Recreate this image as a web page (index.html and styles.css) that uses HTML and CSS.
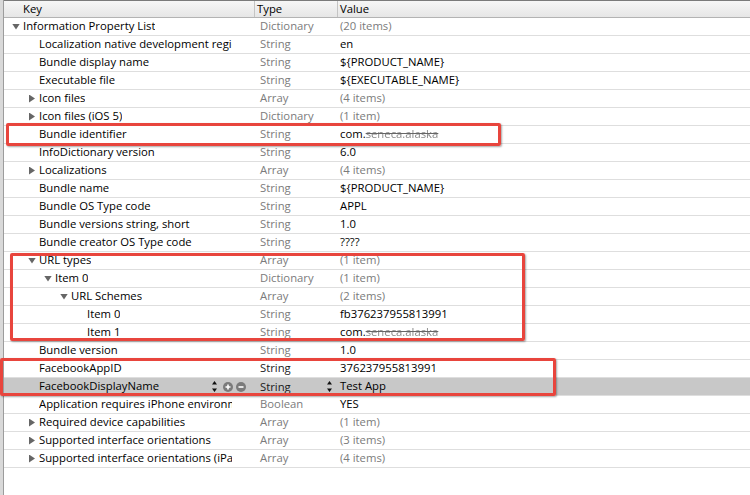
FILE: index.html
```html
<!DOCTYPE html>
<html>
<head>
<meta charset="utf-8">
<link rel="stylesheet" href="styles.css">
</head>
<body>
<div class="page">
  <div class="window">
    <div class="header">
      <div class="hc hkey">Key</div>
      <div class="hc htype">Type</div>
      <div class="hc hvalue">Value</div>
    </div>
    <div class="rows">
      <div class="row"><div class="k l0"><span class="slot"><span class="tri down"></span></span><span class="kt">Information Property List</span></div><div class="t">Dictionary</div><div class="v dim">(20 items)</div></div>
      <div class="row"><div class="k l1"><span class="slot"></span><span class="kt">Localization native development region</span></div><div class="t">String</div><div class="v">en</div></div>
      <div class="row"><div class="k l1"><span class="slot"></span><span class="kt">Bundle display name</span></div><div class="t">String</div><div class="v">${PRODUCT_NAME}</div></div>
      <div class="row"><div class="k l1"><span class="slot"></span><span class="kt">Executable file</span></div><div class="t">String</div><div class="v">${EXECUTABLE_NAME}</div></div>
      <div class="row"><div class="k l1"><span class="slot"><span class="tri right"></span></span><span class="kt">Icon files</span></div><div class="t">Array</div><div class="v dim">(4 items)</div></div>
      <div class="row"><div class="k l1"><span class="slot"><span class="tri right"></span></span><span class="kt">Icon files (iOS 5)</span></div><div class="t">Dictionary</div><div class="v dim">(1 item)</div></div>
      <div class="row"><div class="k l1"><span class="slot"></span><span class="kt">Bundle identifier</span></div><div class="t">String</div><div class="v">com.<span class="blur">seneca.alaska</span></div></div>
      <div class="row"><div class="k l1"><span class="slot"></span><span class="kt">InfoDictionary version</span></div><div class="t">String</div><div class="v">6.0</div></div>
      <div class="row"><div class="k l1"><span class="slot"><span class="tri right"></span></span><span class="kt">Localizations</span></div><div class="t">Array</div><div class="v dim">(4 items)</div></div>
      <div class="row"><div class="k l1"><span class="slot"></span><span class="kt">Bundle name</span></div><div class="t">String</div><div class="v">${PRODUCT_NAME}</div></div>
      <div class="row"><div class="k l1"><span class="slot"></span><span class="kt">Bundle OS Type code</span></div><div class="t">String</div><div class="v">APPL</div></div>
      <div class="row"><div class="k l1"><span class="slot"></span><span class="kt">Bundle versions string, short</span></div><div class="t">String</div><div class="v">1.0</div></div>
      <div class="row"><div class="k l1"><span class="slot"></span><span class="kt">Bundle creator OS Type code</span></div><div class="t">String</div><div class="v">????</div></div>
      <div class="row"><div class="k l1"><span class="slot"><span class="tri down"></span></span><span class="kt">URL types</span></div><div class="t">Array</div><div class="v dim">(1 item)</div></div>
      <div class="row"><div class="k l2"><span class="slot"><span class="tri down"></span></span><span class="kt">Item 0</span></div><div class="t">Dictionary</div><div class="v dim">(1 item)</div></div>
      <div class="row"><div class="k l3"><span class="slot"><span class="tri down"></span></span><span class="kt">URL Schemes</span></div><div class="t">Array</div><div class="v dim">(2 items)</div></div>
      <div class="row"><div class="k l4"><span class="slot"></span><span class="kt">Item 0</span></div><div class="t">String</div><div class="v">fb376237955813991</div></div>
      <div class="row"><div class="k l4"><span class="slot"></span><span class="kt">Item 1</span></div><div class="t">String</div><div class="v">com.<span class="blur">seneca.alaska</span></div></div>
      <div class="row"><div class="k l1"><span class="slot"></span><span class="kt">Bundle version</span></div><div class="t">String</div><div class="v">1.0</div></div>
      <div class="row"><div class="k l1"><span class="slot"></span><span class="kt">FacebookAppID</span></div><div class="t dark">String</div><div class="v">376237955813991</div></div>
      <div class="row selected"><div class="k l1 withctl"><span class="slot"></span><span class="kt">FacebookDisplayName</span>
          <span class="ctls">
            <svg class="updown" width="5" height="11" viewBox="0 0 5 11"><path d="M0 3.5L2.5 0L5 3.5Z M0 7.5L5 7.5L2.5 11Z" fill="#111"/></svg>
            <svg class="circ" width="10" height="10" viewBox="0 0 10 10"><circle cx="5" cy="5" r="5" fill="#7b7b7b"/><path d="M2.5 5H7.5M5 2.5V7.5" stroke="#fff" stroke-width="1.6"/></svg>
            <svg class="circ" width="10" height="10" viewBox="0 0 10 10"><circle cx="5" cy="5" r="5" fill="#7b7b7b"/><path d="M2.5 5H7.5" stroke="#fff" stroke-width="1.6"/></svg>
          </span></div><div class="t dark withctl"><span>String</span><svg class="updown" width="5" height="11" viewBox="0 0 5 11"><path d="M0 3.5L2.5 0L5 3.5Z M0 7.5L5 7.5L2.5 11Z" fill="#111"/></svg></div><div class="v">Test App</div></div>
      <div class="row"><div class="k l1"><span class="slot"></span><span class="kt">Application requires iPhone environment</span></div><div class="t">Boolean</div><div class="v">YES</div></div>
      <div class="row"><div class="k l1"><span class="slot"><span class="tri right"></span></span><span class="kt">Required device capabilities</span></div><div class="t">Array</div><div class="v dim">(1 item)</div></div>
      <div class="row"><div class="k l1"><span class="slot"><span class="tri right"></span></span><span class="kt">Supported interface orientations</span></div><div class="t">Array</div><div class="v dim">(3 items)</div></div>
      <div class="row"><div class="k l1"><span class="slot"><span class="tri right"></span></span><span class="kt">Supported interface orientations (iPad)</span></div><div class="t">Array</div><div class="v dim">(4 items)</div></div>
    </div>
  </div>
  <div class="mark mark1"></div>
  <div class="mark mark2"></div>
  <div class="mark mark3"></div>
</div>
</body>
</html>
```

FILE: styles.css
```css
html, body {
  margin: 0;
  padding: 0;
}
body {
  background: #d9d9d9;
  font-family: "Open Sans", "Noto Sans", "DejaVu Sans", sans-serif;
  font-size: 11.3px;
  color: #000;
  overflow: hidden;
}
.page {
  position: relative;
  width: 750px;
  height: 495px;
}
.window {
  margin-left: 3px;
  border-left: 1px solid #9c9c9c;
  background: #fff;
  height: 495px;
}
.header {
  display: grid;
  grid-template-columns: 250px 83px 1fr;
  height: 16px;
  border-top: 1px solid #7a7a7a;
  border-bottom: 1px solid #b3b3b3;
  background: linear-gradient(#f6f6f6, #e6e6e6);
}
.hc {
  line-height: 16px;
  white-space: nowrap;
}
.hkey {
  padding-left: 19px;
}
.htype {
  border-left: 1px solid #c4c4c4;
  padding-left: 2px;
}
.hvalue {
  border-left: 1px solid #c4c4c4;
  padding-left: 2px;
}
.row {
  display: grid;
  grid-template-columns: 250px 83px 1fr;
  height: 17px;
  border-bottom: 1px solid #dedede;
  line-height: 16px;
  white-space: nowrap;
}
.row.selected {
  background: #c8c8c8;
}
.k {
  display: flex;
  align-items: center;
  overflow: hidden;
  padding-right: 22px;
}
.k.l0 { padding-left: 8px; }
.k.l1 { padding-left: 24px; }
.k.l2 { padding-left: 40px; }
.k.l3 { padding-left: 56px; }
.k.l4 { padding-left: 72px; }
.slot {
  flex: 0 0 11px;
  width: 11px;
  height: 17px;
  display: flex;
  align-items: center;
}
.kt {
  overflow: hidden;
  flex: 0 1 auto;
  padding-bottom: 1px;
}
.tri {
  display: block;
  background: #666;
}
.tri.down {
  width: 8px;
  height: 6px;
  clip-path: polygon(0 0, 100% 0, 50% 100%);
}
.tri.right {
  width: 6px;
  height: 8px;
  margin-left: 1px;
  clip-path: polygon(0 0, 100% 50%, 0 100%);
}
.k.withctl {
  padding-right: 8px;
}
.ctls {
  margin-left: auto;
  display: flex;
  align-items: center;
  gap: 3px;
}
.ctls .updown {
  margin-right: 3px;
}
.t {
  padding-left: 6px;
  color: #7b7b7b;
  overflow: hidden;
}
.t.dark {
  color: #1a1a1a;
}
.t.withctl {
  display: flex;
  align-items: center;
  justify-content: space-between;
  padding-right: 5px;
}
.v {
  padding-left: 3px;
  overflow: hidden;
}
.v.dim {
  color: #7b7b7b;
}
.blur {
  color: #8a8a8a;
  filter: blur(0.7px);
  text-decoration: line-through;
  text-decoration-color: #666;
}
.mark {
  position: absolute;
  border: 3px solid #e8453d;
  border-radius: 2px;
  box-shadow: 1px 1px 2px rgba(0, 0, 0, 0.35);
  box-sizing: border-box;
}
.mark1 {
  left: 6px;
  top: 123px;
  width: 495px;
  height: 23px;
}
.mark2 {
  left: 10px;
  top: 253px;
  width: 515px;
  height: 88px;
}
.mark3 {
  left: 0;
  top: 358px;
  width: 556px;
  height: 38px;
}
```
